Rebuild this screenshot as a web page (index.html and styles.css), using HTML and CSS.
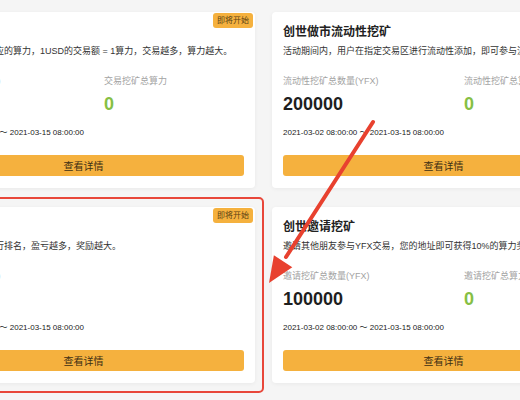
FILE: index.html
```html
<!DOCTYPE html>
<html lang="zh-CN">
<head>
  <meta charset="UTF-8" />
  <title>创世挖矿</title>
  <link rel="stylesheet" href="styles.css">
</head>
<body>

<div class="mine-grid">
  <div class="mine-card">
    <span class="badge">即将开始</span>
    <h3>交易挖矿</h3>
    <p class="desc">用户交易可获得对应的算力，1USD的交易额 = 1算力，交易越多，算力越大。</p>
    <div class="stats">
      <div class="stat">
        <div class="label">交易挖矿总量(YFX)</div>
        <div class="num">30000</div>
      </div>
      <div class="stat">
        <div class="label">交易挖矿总算力</div>
        <div class="num green">0</div>
      </div>
    </div>
    <div class="date">2021-03-02 08:00:00 ～ 2021-03-15 08:00:00</div>
    <button class="btn-detail">查看详情</button>
  </div>

  <div class="mine-card">
    <h3>创世做市流动性挖矿</h3>
    <p class="desc">活动期间内，用户在指定交易区进行流动性添加，即可参与流动性挖矿。</p>
    <div class="stats">
      <div class="stat">
        <div class="label">流动性挖矿总数量(YFX)</div>
        <div class="num">200000</div>
      </div>
      <div class="stat">
        <div class="label">流动性挖矿总算力</div>
        <div class="num green">0</div>
      </div>
    </div>
    <div class="date">2021-03-02 08:00:00 ～ 2021-03-15 08:00:00</div>
    <button class="btn-detail">查看详情</button>
  </div>

  <div class="mine-card">
    <span class="badge">即将开始</span>
    <h3>盈亏挖矿</h3>
    <p class="desc">按交易盈亏比例进行排名，盈亏越多，奖励越大。</p>
    <div class="stats">
      <div class="stat">
        <div class="label">盈亏挖矿总量(YFX)</div>
        <div class="num">&nbsp;</div>
      </div>
    </div>
    <div class="date">2021-03-02 08:00:00 ～ 2021-03-15 08:00:00</div>
    <button class="btn-detail">查看详情</button>
  </div>

  <div class="mine-card">
    <h3>创世邀请挖矿</h3>
    <p class="desc">邀请其他朋友参与YFX交易，您的地址即可获得10%的算力奖励。</p>
    <div class="stats">
      <div class="stat">
        <div class="label">邀请挖矿总数量(YFX)</div>
        <div class="num">100000</div>
      </div>
      <div class="stat">
        <div class="label">邀请挖矿总算力</div>
        <div class="num green">0</div>
      </div>
    </div>
    <div class="date">2021-03-02 08:00:00 ～ 2021-03-15 08:00:00</div>
    <button class="btn-detail">查看详情</button>
  </div>
</div>

<!-- annotation: red frame + arrow -->
<div class="mark-box"></div>
<svg class="mark-arrow" width="520" height="400" viewBox="0 0 520 400">
  <line x1="373" y1="122" x2="286" y2="257" stroke="#e8412f" stroke-width="4" stroke-linecap="round"/>
  <polygon points="269,283 273.9,255.2 292.3,267.2" fill="#e8412f"/>
</svg>

</body>
</html>
```

FILE: styles.css
```css
* { box-sizing: border-box; }
html, body {
  overflow: hidden;
}
body {
  margin: 0;
  width: 520px;
  height: 400px;
  background-color: #f5f5f5;
  font-family: "Liberation Sans", "Noto Sans CJK SC", sans-serif;
  color: #333;
  position: relative;
}
.mine-grid {
  display: grid;
  grid-template-columns: 343px 343px;
  column-gap: 17px;
  row-gap: 19px;
  width: 703px;
  margin-left: -88px;
  padding-top: 12px;
}
.mine-card {
  position: relative;
  background-color: #fff;
  border-radius: 4px;
  box-shadow: 0 1px 4px rgba(0,0,0,0.05);
  padding: 12px 11px;
  display: flex;
  flex-direction: column;
}
.badge {
  position: absolute;
  top: 1px;
  right: 2px;
  height: 15px;
  padding: 0 4px;
  background-color: #f5b13e;
  color: #5c4214;
  font-size: 8px;
  line-height: 15px;
  border-radius: 3px;
}
h3 {
  margin: 0;
  font-size: 12px;
  line-height: 16px;
  font-weight: bold;
  color: #222;
}
.desc {
  margin: 4px 0 0;
  font-size: 9px;
  line-height: 14px;
  color: #333;
  white-space: nowrap;
}
.stats {
  display: flex;
  margin-top: 16px;
}
.stat {
  flex: 0 0 181px;
}
.label {
  font-size: 9px;
  line-height: 14px;
  color: #a3a3a3;
  white-space: nowrap;
}
.num {
  margin-top: 5px;
  font-size: 18px;
  line-height: 22px;
  font-weight: bold;
  color: #1e1e1e;
}
.num.green {
  color: #86bf44;
}
.date {
  margin-top: 12px;
  font-size: 8px;
  line-height: 12px;
  color: #222;
  white-space: nowrap;
}
.btn-detail {
  margin-top: 16px;
  height: 21px;
  width: 100%;
  border: none;
  border-radius: 3px;
  background-color: #f5b13e;
  color: #3d2f14;
  font-family: inherit;
  font-size: 10px;
  padding: 0;
  cursor: pointer;
}
.mark-box {
  position: absolute;
  left: -10px;
  top: 197px;
  width: 274px;
  height: 196px;
  border: 2px solid #e8473a;
  border-radius: 5px;
}
.mark-arrow {
  position: absolute;
  left: 0;
  top: 0;
  pointer-events: none;
}
```
